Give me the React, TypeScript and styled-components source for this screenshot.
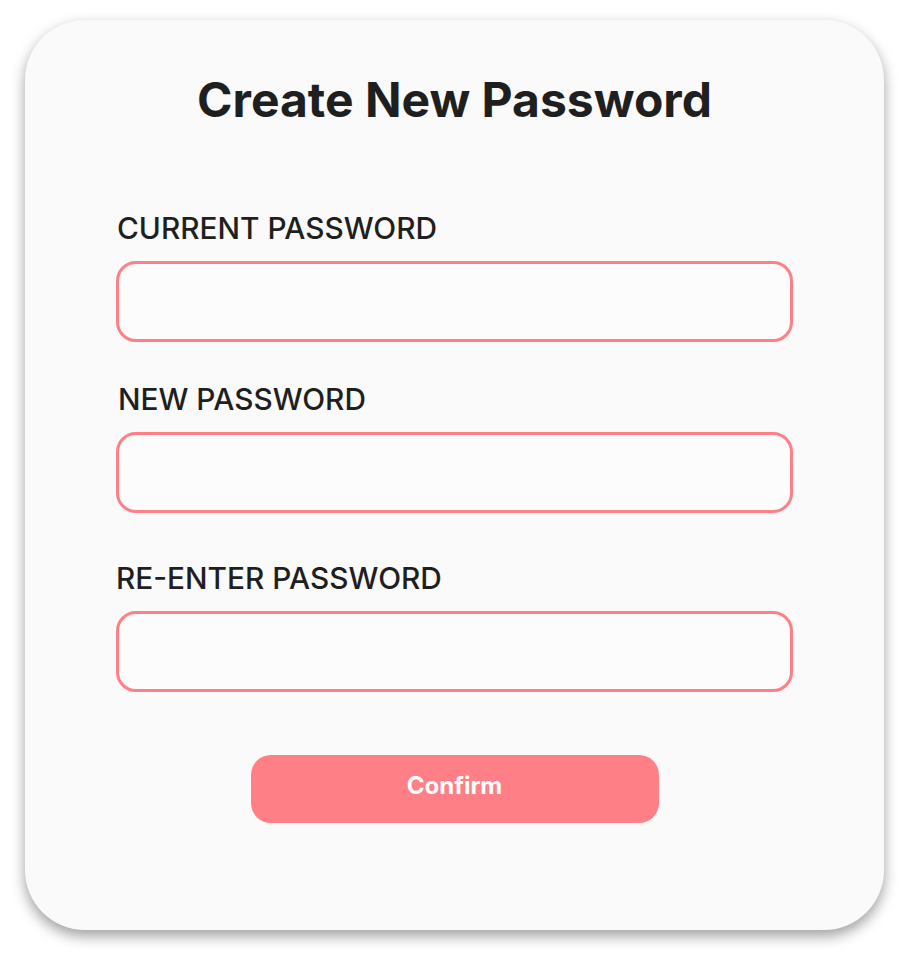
import React from 'react';
import styled, { createGlobalStyle } from 'styled-components';

const GlobalStyle = createGlobalStyle`
  body {
    margin: 0;
    background: #ffffff;
    font-family: Inter, "Noto Sans", sans-serif;
  }
`;

const Page = styled.div`
  display: flex;
  padding: 20px 25px 29px;
`;

const Card = styled.div`
  flex: 1;
  height: 910px;
  box-sizing: border-box;
  background: #fafafa;
  border-radius: 60px;
  box-shadow: 0 6px 14px rgba(0, 0, 0, 0.38);
  padding: 52px 91px 0;
  display: flex;
  flex-direction: column;
`;

const Title = styled.h1`
  margin: 0 0 83px;
  text-align: center;
  font-size: 48px;
  font-weight: 700;
  line-height: 56px;
  color: #1f1f1f;
`;

const Field = styled.div<{ $gap: number }>`
  display: flex;
  flex-direction: column;
  margin-top: ${(p) => p.$gap}px;
`;

const Label = styled.label<{ $indent?: number }>`
  font-size: 29.8px;
  font-weight: 500;
  line-height: 35px;
  color: #1f1f1f;
  padding-left: ${(p) => p.$indent ?? 1}px;
  margin-bottom: 15px;
`;

const Input = styled.input`
  height: 81px;
  box-sizing: border-box;
  border: 3px solid #ff7f87;
  border-radius: 20px;
  background: #fcfcfc;
  outline: none;
  padding: 0 20px;
  font-size: 22px;
  font-family: inherit;
`;

const ButtonRow = styled.div`
  display: flex;
  justify-content: center;
  margin-top: 63px;
`;

const Button = styled.button`
  width: 408px;
  height: 68px;
  padding: 0 0 8px;
  border: none;
  border-radius: 20px;
  background: #ff7f87;
  color: #ffffff;
  font-family: inherit;
  font-size: 24px;
  font-weight: 700;
  cursor: pointer;
`;

const fields = [
  { label: 'CURRENT PASSWORD', gap: 0, indent: 1 },
  { label: 'NEW PASSWORD', gap: 40, indent: 2 },
  { label: 'RE-ENTER PASSWORD', gap: 48, indent: 0 },
];

const App: React.FC = () => {
  return (
    <>
      <GlobalStyle />
      <Page>
        <Card>
          <Title>Create New Password</Title>
          {fields.map((f) => (
            <Field key={f.label} $gap={f.gap}>
              <Label $indent={f.indent}>{f.label}</Label>
              <Input type="password" />
            </Field>
          ))}
          <ButtonRow>
            <Button>Confirm</Button>
          </ButtonRow>
        </Card>
      </Page>
    </>
  );
};

export default App;
